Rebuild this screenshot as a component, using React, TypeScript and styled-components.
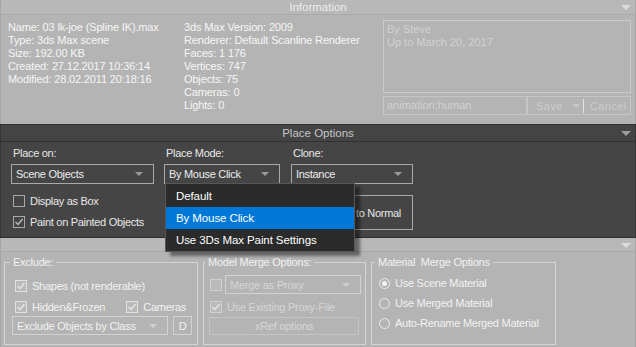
import React from "react";
import styled, { createGlobalStyle } from "styled-components";

const GlobalStyle = createGlobalStyle`
    html, body {
        margin: 0;
        padding: 0;
        background: #b4b4b4;
    }
    body {
        font-family: "Liberation Sans", Arial, sans-serif;
        font-size: 11px;
    }
    * {
        box-sizing: border-box;
    }
`;

const Window = styled.div`
    width: 636px;
    height: 347px;
    display: flex;
    flex-direction: column;
    overflow: hidden;
`;

const Rollout = styled.section<{ $dark?: boolean; $h: number }>`
    position: relative;
    flex-shrink: 0;
    height: ${(p) => p.$h}px;
    display: flex;
    flex-direction: column;
    background: ${(p) => (p.$dark ? "#454545" : "#b4b4b4")};
    border-left: 1px solid ${(p) => (p.$dark ? "#343434" : "#a6a6a6")};
    border-right: 1px solid ${(p) => (p.$dark ? "#343434" : "#a6a6a6")};
    ${(p) => (p.$dark ? "border-top: 1px solid #2e2e2e; border-bottom: 1px solid #2e2e2e;" : "")}
    z-index: ${(p) => (p.$dark ? 2 : 1)};
`;

const RolloutHeader = styled.div<{ $dark?: boolean; $h: number }>`
    position: relative;
    height: ${(p) => p.$h}px;
    flex-shrink: 0;
    display: flex;
    align-items: center;
    justify-content: center;
    background: ${(p) => (p.$dark ? "#444444" : "#b8b8b8")};
    border-bottom: 1px solid ${(p) => (p.$dark ? "#303030" : "#a9a9a9")};
    color: ${(p) => (p.$dark ? "#c4c4c4" : "#ececec")};
    font-size: 11.5px;
`;

const Collapse = styled.span<{ $dark?: boolean }>`
    position: absolute;
    right: 4px;
    top: 50%;
    margin-top: -2px;
    width: 0;
    height: 0;
    border-left: 5px solid transparent;
    border-right: 5px solid transparent;
    border-top: 5px solid ${(p) => (p.$dark ? "#9c9c9c" : "#dcdcdc")};
`;

/* ---------- Information ---------- */

const InfoBody = styled.div`
    display: flex;
    padding: 6px 0 0 7px;
`;

const InfoColumn = styled.div<{ $w: number }>`
    width: ${(p) => p.$w}px;
    display: flex;
    flex-direction: column;
    color: #f6f6f6;
    line-height: 13px;
    letter-spacing: -0.15px;
    white-space: nowrap;
`;

const NotesBlock = styled.div`
    width: 248px;
    margin-top: -1px;
    display: flex;
    flex-direction: column;
    gap: 3px;
`;

const NotesArea = styled.div`
    height: 73px;
    border: 1px solid #cbcbcb;
    padding: 2px 3px;
    color: #d2d2d2;
    line-height: 13px;
`;

const TagsRow = styled.div`
    height: 19px;
    display: flex;
`;

const TagsInput = styled.div`
    width: 144px;
    border: 1px solid #c6c6c6;
    padding-left: 3px;
    color: #d2d2d2;
    line-height: 17px;
`;

const SaveGroup = styled.div`
    flex: 1;
    display: flex;
    align-items: center;
    border: 1px solid #c6c6c6;
    color: #cdcdcd;
    letter-spacing: 0.4px;
`;

const SaveBtn = styled.div`
    width: 55px;
    display: flex;
    align-items: center;
    padding-left: 8px;
    gap: 9px;
`;

const SmallArrow = styled.span<{ $c: string }>`
    width: 0;
    height: 0;
    border-left: 4px solid transparent;
    border-right: 4px solid transparent;
    border-top: 4px solid ${(p) => p.$c};
`;

const Divider = styled.span`
    width: 1px;
    height: 14px;
    background: #e4e4e4;
`;

const CancelBtn = styled.div`
    flex: 1;
    padding-left: 6px;
`;

/* ---------- Place Options ---------- */

const PlaceBody = styled.div`
    display: flex;
    padding: 4px 0 0 10px;
    gap: 10px;
    color: #e8e8e8;
    letter-spacing: -0.3px;
`;

const PlaceCol = styled.div<{ $w: number }>`
    width: ${(p) => p.$w}px;
    display: flex;
    flex-direction: column;
`;

const FieldLabel = styled.div`
    height: 14px;
    line-height: 14px;
    margin-bottom: 4px;
    padding-left: 2px;
`;

const Select = styled.div<{ $w: number; $h?: number; $dark?: boolean; $dim?: boolean }>`
    position: relative;
    width: ${(p) => p.$w}px;
    height: ${(p) => p.$h ?? 20}px;
    flex-shrink: 0;
    display: flex;
    align-items: center;
    justify-content: space-between;
    padding: 0 10px 0 4px;
    border: 1px solid ${(p) => (p.$dark ? "#a9a9a9" : "#d2d2d2")};
    color: ${(p) => (p.$dark ? "#ececec" : p.$dim ? "#d6d6d6" : "#f2f2f2")};
    white-space: nowrap;
`;

const CheckRow = styled.div<{ $mt?: number; $ml?: number; $dim?: boolean }>`
    display: flex;
    align-items: center;
    gap: 5px;
    height: 14px;
    margin-top: ${(p) => p.$mt ?? 0}px;
    margin-left: ${(p) => p.$ml ?? 0}px;
    white-space: nowrap;
    color: ${(p) => (p.$dim ? "#d6d6d6" : "inherit")};
`;

const Box = styled.span<{ $dark?: boolean; $dim?: boolean }>`
    width: 12px;
    height: 12px;
    flex-shrink: 0;
    display: flex;
    align-items: center;
    justify-content: center;
    border: 1px solid ${(p) => (p.$dark ? "#a8a8a8" : p.$dim ? "#d0d0d0" : "#e2e2e2")};
    background: ${(p) => (p.$dark ? "#454545" : "#bababa")};
`;

const ResetButton = styled.div`
    height: 35px;
    margin-top: 11px;
    border: 1px solid #a9a9a9;
    display: flex;
    align-items: center;
    justify-content: flex-end;
    padding-right: 11px;
`;

const Popup = styled.div`
    position: absolute;
    left: 0;
    top: 100%;
    width: 190px;
    padding-top: 1px;
    background: #2b2b2b;
    border: 1px solid #565656;
    box-shadow: 5px 4px 3px rgba(0, 0, 0, 0.45);
    font-size: 11.5px;
    letter-spacing: -0.1px;
    z-index: 5;
`;

const PopupItem = styled.div<{ $active?: boolean }>`
    height: 22px;
    line-height: 22px;
    padding-left: 10px;
    color: #ffffff;
    background: ${(p) => (p.$active ? "#0078d7" : "transparent")};
`;

/* ---------- Merge Options ---------- */

const MergeBody = styled.div`
    display: flex;
    padding: 4px 0 0 3px;
    gap: 5px;
    color: #f2f2f2;
    letter-spacing: -0.25px;
`;

const Group = styled.fieldset<{ $w: number; $pl: number; $pt: number; $gap: number }>`
    width: ${(p) => p.$w}px;
    height: 89px;
    margin: 0;
    min-width: 0;
    padding: ${(p) => p.$pt}px 0 0 ${(p) => p.$pl}px;
    border: 1px solid #d4d4d4;
    display: flex;
    flex-direction: column;
    gap: ${(p) => p.$gap}px;
`;

const Legend = styled.legend<{ $ml: number }>`
    padding: 0 3px;
    margin-left: ${(p) => p.$ml}px;
    line-height: 13px;
    white-space: pre;
`;

const SelectRow = styled.div<{ $mt?: number; $gap?: number }>`
    display: flex;
    align-items: center;
    gap: ${(p) => p.$gap ?? 5}px;
    margin-top: ${(p) => p.$mt ?? 0}px;
`;

const SquareButton = styled.div`
    width: 19px;
    height: 19px;
    border: 1px solid #d2d2d2;
    display: flex;
    align-items: center;
    justify-content: center;
`;

const WideButton = styled.div`
    width: 150px;
    height: 18px;
    border: 1px solid #c4c4c4;
    display: flex;
    align-items: center;
    justify-content: center;
    color: #d8d8d8;
`;

const Radio = styled.span<{ $on?: boolean }>`
    width: 11px;
    height: 11px;
    border-radius: 50%;
    border: 1px solid #ececec;
    display: flex;
    align-items: center;
    justify-content: center;
    &::after {
        content: "";
        width: 5px;
        height: 5px;
        border-radius: 50%;
        background: ${(p) => (p.$on ? "#f2f2f2" : "transparent")};
    }
`;

const Tick = ({ color }: { color: string }) => (
    <svg width="10" height="10" viewBox="0 0 10 10">
        <polyline points="1.5,5 4,7.5 8.5,2" fill="none" stroke={color} strokeWidth="1.4" />
    </svg>
);

const Check = ({
    label,
    on,
    dark,
    dim,
    mt,
    ml,
}: {
    label: string;
    on?: boolean;
    dark?: boolean;
    dim?: boolean;
    mt?: number;
    ml?: number;
}) => (
    <CheckRow $mt={mt} $ml={ml} $dim={dim}>
        <Box $dark={dark} $dim={dim}>
            {on && <Tick color={dark ? "#bcbcbc" : "#e6e6e6"} />}
        </Box>
        {label}
    </CheckRow>
);

const App = () => {
    return (
        <>
            <GlobalStyle />
            <Window>
                <Rollout $h={124}>
                    <RolloutHeader $h={15}>
                        Information
                        <Collapse />
                    </RolloutHeader>
                    <InfoBody>
                        <InfoColumn $w={176}>
                            <span>Name: 03 lk-joe (Spline IK).max</span>
                            <span>Type: 3ds Max scene</span>
                            <span>Size: 192.00 KB</span>
                            <span>Created: 27.12.2017 10:36:14</span>
                            <span>Modified: 28.02.2011 20:18:16</span>
                        </InfoColumn>
                        <InfoColumn $w={199}>
                            <span>3ds Max Version: 2009</span>
                            <span>Renderer: Default Scanline Renderer</span>
                            <span>Faces: 1 176</span>
                            <span>Vertices: 747</span>
                            <span>Objects: 75</span>
                            <span>Cameras: 0</span>
                            <span>Lights: 0</span>
                        </InfoColumn>
                        <NotesBlock>
                            <NotesArea>
                                By Steve
                                <br />
                                Up to March 20, 2017
                            </NotesArea>
                            <TagsRow>
                                <TagsInput>animation;human</TagsInput>
                                <SaveGroup>
                                    <SaveBtn>
                                        Save
                                        <SmallArrow $c="#c9c9c9" />
                                    </SaveBtn>
                                    <Divider />
                                    <CancelBtn>Cancel</CancelBtn>
                                </SaveGroup>
                            </TagsRow>
                        </NotesBlock>
                    </InfoBody>
                </Rollout>

                <Rollout $dark $h={114}>
                    <RolloutHeader $dark $h={17}>
                        Place Options
                        <Collapse $dark />
                    </RolloutHeader>
                    <PlaceBody>
                        <PlaceCol $w={143}>
                            <FieldLabel>Place on:</FieldLabel>
                            <Select $dark $w={143}>
                                Scene Objects
                                <SmallArrow $c="#9a9a9a" />
                            </Select>
                            <Check dark label="Display as Box" mt={10} ml={2} />
                            <Check dark on label="Paint on Painted Objects" mt={7} ml={2} />
                        </PlaceCol>
                        <PlaceCol $w={117}>
                            <FieldLabel>Place Mode:</FieldLabel>
                            <Select $dark $w={116}>
                                By Mouse Click
                                <SmallArrow $c="#9a9a9a" />
                                <Popup>
                                    <PopupItem>Default</PopupItem>
                                    <PopupItem $active>By Mouse Click</PopupItem>
                                    <PopupItem>Use 3Ds Max Paint Settings</PopupItem>
                                </Popup>
                            </Select>
                        </PlaceCol>
                        <PlaceCol $w={122}>
                            <FieldLabel>Clone:</FieldLabel>
                            <Select $dark $w={122}>
                                Instance
                                <SmallArrow $c="#9a9a9a" />
                            </Select>
                            <ResetButton>Reset Scale to Normal</ResetButton>
                        </PlaceCol>
                    </PlaceBody>
                </Rollout>

                <Rollout $h={109}>
                    <RolloutHeader $h={14}>
                        <Collapse />
                    </RolloutHeader>
                    <MergeBody>
                        <Group $w={194} $pl={7} $pt={10} $gap={7}>
                            <Legend $ml={-2}>Exclude:</Legend>
                            <Check on label="Shapes (not renderable)" ml={3} />
                            <SelectRow>
                                <Check on label="Hidden&Frozen" ml={3} />
                                <Check on label="Cameras" ml={16} />
                            </SelectRow>
                            <SelectRow $mt={-5}>
                                <Select $w={156} $h={19}>
                                    Exclude Objects by Class
                                    <SmallArrow $c="#cfcfcf" />
                                </Select>
                                <SquareButton>D</SquareButton>
                            </SelectRow>
                        </Group>
                        <Group $w={163} $pl={5} $pt={6} $gap={3}>
                            <Legend $ml={-4}>Model Merge Options:</Legend>
                            <SelectRow $gap={3}>
                                <Check label="" ml={1} dim />
                                <Select $w={136} $h={19} $dim>
                                    Merge as Proxy
                                    <SmallArrow $c="#cfcfcf" />
                                </Select>
                            </SelectRow>
                            <Check on dim label="Use Existing Proxy-File" ml={1} mt={3} />
                            <WideButton>xRef options</WideButton>
                        </Group>
                        <Group $w={185} $pl={7} $pt={7} $gap={6}>
                            <Legend $ml={-4}>Material  Merge Options</Legend>
                            <CheckRow>
                                <Radio $on />
                                Use Scene Material
                            </CheckRow>
                            <CheckRow>
                                <Radio />
                                Use Merged Material
                            </CheckRow>
                            <CheckRow>
                                <Radio />
                                Auto-Rename Merged Material
                            </CheckRow>
                        </Group>
                    </MergeBody>
                </Rollout>
            </Window>
        </>
    );
};

export default App;
